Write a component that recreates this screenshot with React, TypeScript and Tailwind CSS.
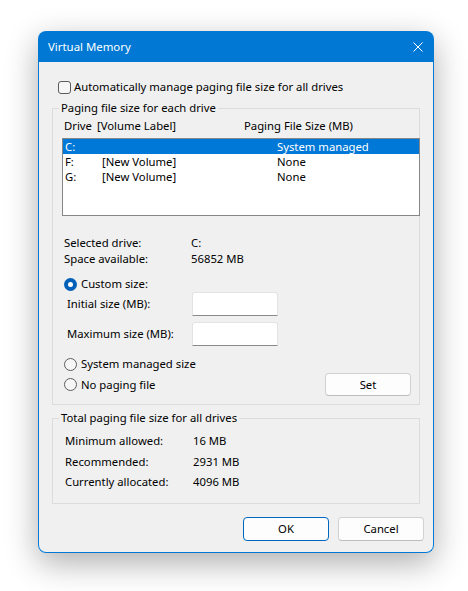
import React from 'react';

const FONT = { fontFamily: '"Noto Sans", "Open Sans", sans-serif' };

function Radio({ checked }: { checked?: boolean }) {
  if (checked) {
    return (
      <span className="flex h-[13px] w-[13px] shrink-0 items-center justify-center rounded-full bg-[#005fb8]">
        <span className="h-[5px] w-[5px] rounded-full bg-white" />
      </span>
    );
  }
  return <span className="h-[13px] w-[13px] shrink-0 rounded-full border border-[#5c5c5c] bg-[#f6f6f6]" />;
}

function GroupBox({ label, className, children }: { label: string; className: string; children: React.ReactNode }) {
  return (
    <div className={`relative w-[368px] border border-[#dcdcdc] ${className}`}>
      {/* legend sits on the top border */}
      <span className="absolute -top-[9px] left-[6px] bg-[#f0f0f0] px-[2px] leading-[16px]">{label}</span>
      {children}
    </div>
  );
}

function Button({ children, primary }: { children: React.ReactNode; primary?: boolean }) {
  return (
    <button
      className={`flex h-[24px] w-[86px] items-center justify-center rounded-[4px] border bg-[#fdfdfd] leading-[16px] text-black ${
        primary ? 'border-[#0067c0]' : 'border-[#d1d1d1] border-b-[#bdbdbd]'
      }`}
    >
      {children}
    </button>
  );
}

const drives = [
  { drive: 'C:', label: '', size: 'System managed', selected: true },
  { drive: 'F:', label: '[New Volume]', size: 'None' },
  { drive: 'G:', label: '[New Volume]', size: 'None' },
];

export default function App() {
  return (
    <div className="h-[591px] w-[468px] bg-white pl-[38px] pt-[31px] text-[11.3px] text-black" style={FONT}>
      <div className="flex h-[522px] w-[396px] flex-col rounded-[8px] shadow-[0_10px_32px_rgba(0,0,0,0.32)]">
        {/* Title bar */}
        <div className="flex h-[31px] shrink-0 items-center justify-between rounded-t-[8px] bg-[#0078d4] pl-[10px] pr-[11px] text-white">
          <span className="text-[11.4px] leading-[16px]">Virtual Memory</span>
          <svg width="10" height="10" viewBox="0 0 10 10" fill="none" stroke="white" strokeWidth="1">
            <path d="M0.5 0.5L9.5 9.5M9.5 0.5L0.5 9.5" />
          </svg>
        </div>

        {/* Body */}
        <div className="flex flex-1 flex-col rounded-b-[8px] border border-t-0 border-[#0078d4] bg-[#f0f0f0] pl-[13px] pt-[17px]">
          <label className="ml-[6px] flex h-[16px] items-center gap-[3px] leading-[16px]">
            <span className="h-[13px] w-[13px] shrink-0 rounded-[3px] border border-[#5c5c5c] bg-[#f6f6f6]" />
            Automatically manage paging file size for all drives
          </label>

          <GroupBox label="Paging file size for each drive" className="mt-[13px] h-[297px]">
            <div className="ml-[10px] mt-[9px] flex leading-[16px]">
              <span className="w-[34px] pl-[1px]">Drive</span>
              <span className="w-[147px]">[Volume Label]</span>
              <span>Paging File Size (MB)</span>
            </div>

            <div className="ml-[9px] mt-[4px] h-[78px] w-[358px] border border-[#868686] bg-white">
              {drives.map((d) => (
                <div
                  key={d.drive}
                  className={`flex h-[15px] items-center pl-[2px] leading-[15px] ${d.selected ? 'bg-[#0078d7] text-white' : ''}`}
                >
                  <span className="w-[37px]">{d.drive}</span>
                  <span className="w-[175px]">{d.label}</span>
                  <span>{d.size}</span>
                </div>
              ))}
            </div>

            <div className="ml-[11px] mt-[19px] flex flex-col leading-[16px]">
              <div className="flex">
                <span className="w-[127px]">Selected drive:</span>
                <span>C:</span>
              </div>
              <div className="flex">
                <span className="w-[127px]">Space available:</span>
                <span>56852 MB</span>
              </div>
            </div>

            <div className="ml-[11px] mt-[9px] flex h-[16px] items-center gap-[4px] leading-[16px]">
              <Radio checked />
              <span>Custom size:</span>
            </div>

            <div className="ml-[14px] flex h-[24px] items-center leading-[16px]">
              <span className="w-[125px]">Initial size (MB):</span>
              <span className="h-[24px] w-[86px] rounded-t-[3px] border border-[#e3e3e3] border-b-[#8a8a8a] bg-white" />
            </div>
            <div className="ml-[14px] mt-[6px] flex h-[24px] items-center leading-[16px]">
              <span className="w-[125px]">Maximum size (MB):</span>
              <span className="h-[24px] w-[86px] rounded-t-[3px] border border-[#e3e3e3] border-b-[#8a8a8a] bg-white" />
            </div>

            <div className="ml-[11px] mt-[10px] flex h-[16px] items-center gap-[4px] leading-[16px]">
              <Radio />
              <span>System managed size</span>
            </div>
            <div className="ml-[11px] mr-[8px] mt-[1px] flex h-[23px] items-center justify-between leading-[16px]">
              <div className="flex items-center gap-[4px]">
                <Radio />
                <span>No paging file</span>
              </div>
              <button className="flex h-[23px] w-[86px] items-center justify-center rounded-[4px] border border-[#d1d1d1] border-b-[#bdbdbd] bg-[#fdfdfd]">
                Set
              </button>
            </div>
          </GroupBox>

          <GroupBox label="Total paging file size for all drives" className="mt-[13px] h-[86px]">
            <div className="ml-[12px] mt-[14px] flex flex-col gap-[4.6px] leading-[16px]">
              <div className="flex">
                <span className="w-[128px]">Minimum allowed:</span>
                <span>16 MB</span>
              </div>
              <div className="flex">
                <span className="w-[128px]">Recommended:</span>
                <span>2931 MB</span>
              </div>
              <div className="flex">
                <span className="w-[128px]">Currently allocated:</span>
                <span>4096 MB</span>
              </div>
            </div>
          </GroupBox>

          <div className="mr-[9px] mt-[13px] flex justify-end gap-[9px]">
            <Button primary>OK</Button>
            <Button>Cancel</Button>
          </div>
        </div>
      </div>
    </div>
  );
}
